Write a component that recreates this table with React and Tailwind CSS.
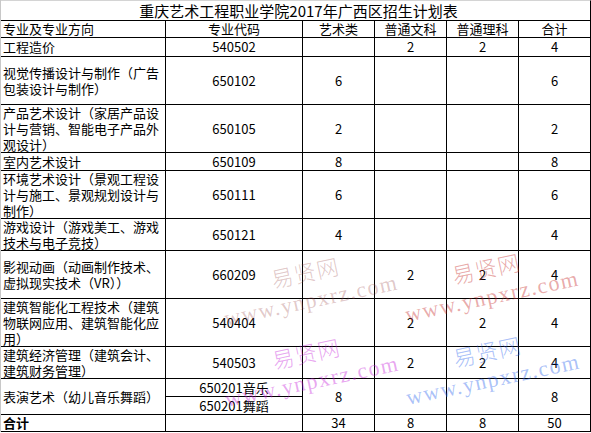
import React from 'react'

const rows = [
  { name: ['工程造价'], code: '540502', art: '', wen: '2', li: '2', total: '4', h: 'h-[19px]' },
  { name: ['视觉传播设计与制作（广告', '包装设计与制作）'], code: '650102', art: '6', wen: '', li: '', total: '6', h: 'h-[48px]' },
  { name: ['产品艺术设计（家居产品设', '计与营销、智能电子产品外', '观设计）'], code: '650105', art: '2', wen: '', li: '', total: '2', h: 'h-[48px]' },
  { name: ['室内艺术设计'], code: '650109', art: '8', wen: '', li: '', total: '8', h: 'h-[18px]' },
  { name: ['环境艺术设计（景观工程设', '计与施工、景观规划设计与', '制作）'], code: '650111', art: '6', wen: '', li: '', total: '6', h: 'h-[48px]' },
  { name: ['游戏设计（游戏美工、游戏', '技术与电子竞技）'], code: '650121', art: '4', wen: '', li: '', total: '4', h: 'h-[32px]' },
  { name: ['影视动画（动画制作技术、', '虚拟现实技术（VR））'], code: '660209', art: '', wen: '2', li: '2', total: '4', h: 'h-[48px]' },
  { name: ['建筑智能化工程技术（建筑', '物联网应用、建筑智能化应', '用）'], code: '540404', art: '', wen: '2', li: '2', total: '4', h: 'h-[48px]' },
  { name: ['建筑经济管理（建筑会计、', '建筑财务管理）'], code: '540503', art: '', wen: '2', li: '2', total: '4', h: 'h-[32px]' },
]

const Cell = ({ children, className = '' }) => (
  <div className={`flex items-center justify-center border-r border-black ${className}`}>
    {children}
  </div>
)

const NumCells = ({ art, wen, li, total }) => (
  <>
    <Cell className="w-[72px]">{art}</Cell>
    <Cell className="w-[72px]">{wen}</Cell>
    <Cell className="w-[72px]">{li}</Cell>
    <Cell className="w-[72px]">{total}</Cell>
  </>
)

const Mark = ({ className }) => (
  <div
    className={`absolute -translate-x-1/2 -translate-y-1/2 -rotate-12 flex flex-col items-center whitespace-nowrap pointer-events-none ${className}`}
  >
    <div className="text-[22px] leading-[30px] tracking-[1px] font-['Noto_Sans_CJK_SC',sans-serif] font-light">易贤网</div>
    <div className="text-[22px] leading-[30px] tracking-[1.5px] font-['Liberation_Serif',serif]">www.ynpxrz.com</div>
  </div>
)

export default function App() {
  return (
    <div className="relative w-[591px] h-[433px] bg-white overflow-hidden text-black text-[13px] leading-[16px] font-['Noto_Sans_CJK_SC',sans-serif]">
      <div className="border-l border-[#c8c8c8] w-[591px]">
        {/* Title */}
        <div className="h-[21px] border-t border-t-[#d4d4d4] border-b border-black border-r flex items-center justify-center pl-[6px] text-[15px]">
          重庆艺术工程职业学院2017年广西区招生计划表
        </div>

        {/* Header */}
        <div className="flex h-[17px] border-b border-black">
          <div className="w-[165px] border-r border-black flex items-center pl-[2px]">专业及专业方向</div>
          <Cell className="w-[137px]">专业代码</Cell>
          <Cell className="w-[72px]">艺术类</Cell>
          <Cell className="w-[72px]">普通文科</Cell>
          <Cell className="w-[72px]">普通理科</Cell>
          <Cell className="w-[72px]">合计</Cell>
        </div>

        {rows.map((r) => (
          <div key={r.code} className={`flex border-b border-black ${r.h}`}>
            <div className="w-[165px] border-r border-black flex flex-col justify-center pl-[2px] whitespace-nowrap">
              {r.name.map((line) => (
                <span key={line}>{line}</span>
              ))}
            </div>
            <Cell className="w-[137px]">{r.code}</Cell>
            <NumCells {...r} />
          </div>
        ))}

        {/* 表演艺术 */}
        <div className="flex h-[36px] border-b border-black">
          <div className="w-[165px] border-r border-black flex items-center pl-[2px]">表演艺术（幼儿音乐舞蹈）</div>
          <div className="w-[137px] border-r border-black flex flex-col">
            <div className="h-[18px] border-b border-black flex items-center justify-center">650201音乐</div>
            <div className="flex-1 flex items-center justify-center">650201舞蹈</div>
          </div>
          <NumCells art="8" wen="" li="" total="8" />
        </div>

        {/* 合计 */}
        <div className="flex h-[17px] border-b border-black">
          <div className="w-[165px] border-r border-black flex items-center pl-[2px] font-bold">合计</div>
          <Cell className="w-[137px]" />
          <NumCells art="34" wen="8" li="8" total="50" />
        </div>
      </div>

      <Mark className="left-[489px] top-[282px] text-[rgba(197,38,38,0.4)]" />
      <Mark className="left-[308px] top-[286px] text-[rgba(152,72,72,0.3)]" />
      <Mark className="left-[309px] top-[367px] text-[rgba(197,27,217,0.4)]" />
      <Mark className="left-[490px] top-[365px] text-[rgba(37,97,237,0.4)]" />
    </div>
  )
}
